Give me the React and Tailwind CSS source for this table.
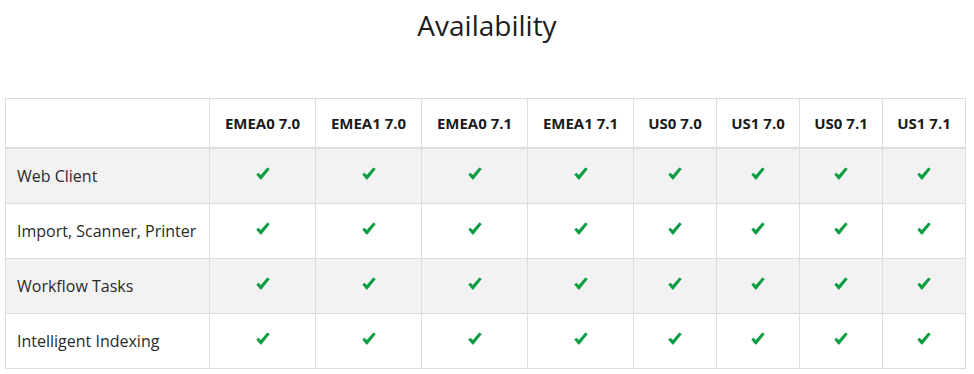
import React from 'react';

const COLUMNS = [
  { label: 'EMEA0 7.0', w: 'w-[106px]' },
  { label: 'EMEA1 7.0', w: 'w-[106px]' },
  { label: 'EMEA0 7.1', w: 'w-[106px]' },
  { label: 'EMEA1 7.1', w: 'w-[106px]' },
  { label: 'US0 7.0', w: 'w-[83px]' },
  { label: 'US1 7.0', w: 'w-[83px]' },
  { label: 'US0 7.1', w: 'w-[83px]' },
  { label: 'US1 7.1', w: 'w-[83px]' },
];

const FEATURES = ['Web Client', 'Import, Scanner, Printer', 'Workflow Tasks', 'Intelligent Indexing'];

// heavy check glyph, drawn so it looks the same everywhere
function Check() {
  return (
    <svg width="14" height="13" viewBox="0 0 14 13" className="block">
      <path d="M0.3 7.4 L2.4 5.7 L4.8 8.1 L11.3 0.4 L13.8 2.1 L5.4 12.6 L4.3 12.6 Z" fill="#0b9e43" />
    </svg>
  );
}

export default function App() {
  return (
    <div className="bg-white w-[974px] h-[374px] text-[#222]" style={{ fontFamily: '"Open Sans", "Liberation Sans", sans-serif' }}>
      <h1 className="pt-[10px] text-center text-[28px] leading-[31px] font-normal text-[#1c1c1c]">Availability</h1>

      <div className="ml-[5px] mt-[57px] w-[961px] border-l border-t border-[#dddddd]">
        {/* header */}
        <div className="flex border-b-2 border-[#dddddd]">
          <div className="w-[204px] h-[48px] border-r border-[#dddddd]" />
          {COLUMNS.map(col => (
            <div
              key={col.label}
              className={`${col.w} h-[48px] border-r border-[#dddddd] flex items-center justify-center text-[15px] font-bold text-[#1a1a1a]`}
            >
              {col.label}
            </div>
          ))}
        </div>

        {FEATURES.map((name, i) => (
          <div key={name} className={`flex border-b border-[#dddddd] ${i % 2 === 0 ? 'bg-[#f2f2f2]' : 'bg-white'}`}>
            <div className="w-[204px] h-[54px] border-r border-[#dddddd] flex items-center pl-[11px] text-[16px] text-[#2a2a2a]">
              {name}
            </div>
            {COLUMNS.map(col => (
              <div key={col.label} className={`${col.w} h-[54px] border-r border-[#dddddd] flex justify-center pt-[18px]`}>
                <Check />
              </div>
            ))}
          </div>
        ))}
      </div>
    </div>
  );
}
